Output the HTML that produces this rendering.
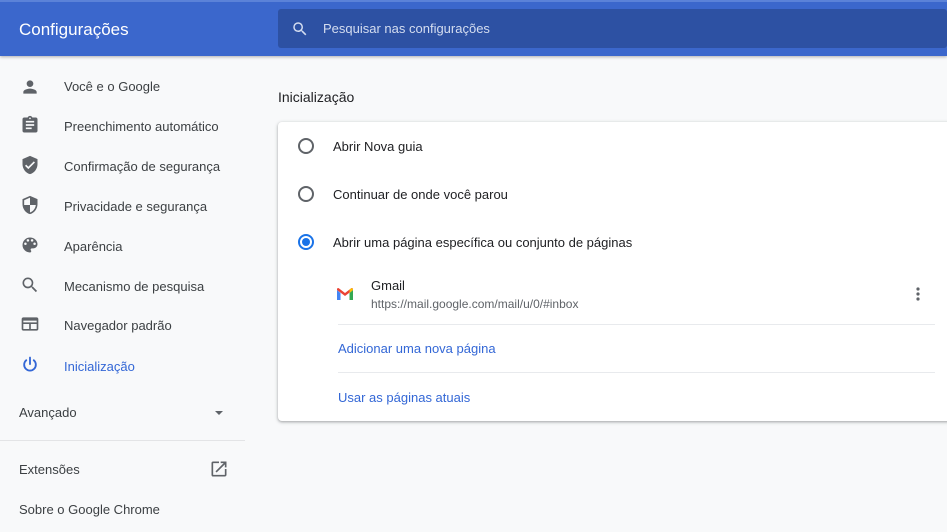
<!DOCTYPE html>
<html><head><meta charset="utf-8"><style>
*{margin:0;padding:0;box-sizing:border-box}
body{width:947px;height:532px;overflow:hidden;background:#f8f9fa;font-family:"Liberation Sans",sans-serif;position:relative;color:#202124}
.hdr{position:absolute;left:0;top:0;width:947px;height:56px;background:#3b67cc;border-top:2px solid #5b82d8;box-shadow:0 1px 3px rgba(0,0,0,.3)}
.title{position:absolute;left:19px;top:18px;color:#fff;font-size:17px}
.search{position:absolute;left:278px;top:7px;width:669px;height:39px;background:#2d51a3;border-radius:3px}
.search span{position:absolute;left:45px;top:12px;color:#d4ddf0;font-size:13px}
.search svg{position:absolute;left:13px;top:11px}
.nav{position:absolute;left:0;font-size:13px;color:#3c4043}
.nav svg{position:absolute;left:20px}
.it{position:absolute;left:64px}
.ic{fill:#5f6368}
.sec{position:absolute;left:278px;top:89px;font-size:14px;color:#202124}
.card{position:absolute;left:278px;top:122px;width:675px;height:299px;background:#fff;border-radius:4px;box-shadow:0 1px 2px rgba(60,64,67,.3),0 1px 3px 1px rgba(60,64,67,.15)}
.rad{position:absolute;left:20px;width:16px;height:16px;border:2px solid #5f6368;border-radius:50%}
.rad.on{border-color:#1a73e8}
.rad.on::after{content:"";position:absolute;left:2px;top:2px;width:8px;height:8px;border-radius:50%;background:#1a73e8}
.lbl{position:absolute;left:55px;font-size:13px;color:#202124}
.link{position:absolute;left:60px;font-size:13px;color:#3367d6}
.hr{position:absolute;left:60px;right:18px;height:1px;background:#e8eaed}
</style></head><body>
<div class="hdr"><div class="title">Configurações</div>
<div class="search"><svg width="18" height="18" viewBox="0 0 24 24"><path fill="#d4ddf0" d="M15.5 14h-.79l-.28-.27A6.47 6.47 0 0016 9.5 6.5 6.5 0 109.5 16c1.610 0 3.09-.59 4.23-1.57l.27.28v.79l5 4.99L20.49 19l-4.99-5zm-6 0C7.01 14 5 11.99 5 9.5S7.01 5 9.5 5 14 7.01 14 9.5 11.99 14 9.5 14z"/></svg><span>Pesquisar nas configurações</span></div></div>

<div class="nav" style="top:77px;width:240px">
<svg style="top:0" width="20" height="20" viewBox="0 0 24 24" class="ic"><path d="M12 12c2.21 0 4-1.790 4-4s-1.79-4-4-4-4 1.79-4 4 1.79 4 4 4zm0 2c-2.67 0-8 1.34-8 4v2h16v-2c0-2.66-5.33-4-8-4z"/></svg><span class="it" style="top:2px">Você e o Google</span>
<svg style="top:38px" width="20" height="20" viewBox="0 0 24 24" class="ic"><path d="M19 3h-4.18C14.4 1.84 13.3 1 12 1s-2.4.84-2.82 2H5c-1.1 0-2 .9-2 2v14c0 1.1.9 2 2 2h14c1.1 0 2-.9 2-2V5c0-1.1-.9-2-2-2zm-7 0c.55 0 1 .45 1 1s-.45 1-1 1-1-.45-1-1 .45-1 1-1zm2 14H7v-2h7v2zm3-4H7v-2h10v2zm0-4H7V7h10v2z"/></svg><span class="it" style="top:42px">Preenchimento automático</span>
<svg style="top:78px" width="20" height="20" viewBox="0 0 24 24" class="ic"><path d="M12 1L3 5v6c0 5.55 3.84 10.74 9 12 5.16-1.26 9-6.45 9-12V5l-9-4zm-2 16l-4-4 1.41-1.41L10 14.17l6.59-6.59L18 9l-8 8z"/></svg><span class="it" style="top:82px">Confirmação de segurança</span>
<svg style="top:118px" width="20" height="20" viewBox="0 0 24 24" class="ic"><path d="M12 1L3 5v6c0 5.55 3.84 10.74 9 12 5.16-1.26 9-6.45 9-12V5l-9-4zm0 10.99h7c-.53 4.12-3.28 7.79-7 8.94V12H5V6.3l7-3.11v8.8z"/></svg><span class="it" style="top:122px">Privacidade e segurança</span>
<svg style="top:158px" width="20" height="20" viewBox="0 0 24 24" class="ic"><path d="M12 3a9 9 0 000 18c.83 0 1.5-.67 1.5-1.5 0-.39-.15-.74-.39-1.01-.23-.26-.38-.61-.38-.99 0-.83.67-1.5 1.5-1.5H16c2.76 0 5-2.24 5-5 0-4.42-4.03-8-9-8zm-5.5 9a1.5 1.5 0 110-3 1.5 1.5 0 010 3zm3-4a1.5 1.5 0 110-3 1.5 1.5 0 010 3zm5 0a1.5 1.5 0 110-3 1.5 1.5 0 010 3zm3 4a1.5 1.5 0 110-3 1.5 1.5 0 010 3z"/></svg><span class="it" style="top:162px">Aparência</span>
<svg style="top:198px" width="20" height="20" viewBox="0 0 24 24" class="ic"><path d="M15.5 14h-.79l-.28-.27A6.47 6.47 0 0016 9.5 6.5 6.5 0 109.5 16c1.61 0 3.09-.59 4.23-1.57l.27.28v.79l5 4.99L20.49 19l-4.99-5zm-6 0C7.01 14 5 11.99 5 9.5S7.01 5 9.5 5 14 7.01 14 9.5 11.99 14 9.5 14z"/></svg><span class="it" style="top:202px">Mecanismo de pesquisa</span>
<svg style="top:237px" width="20" height="20" viewBox="0 0 24 24" class="ic"><path d="M20 4H4c-1.1 0-2 .9-2 2v12c0 1.1.9 2 2 2h16c1.1 0 2-.9 2-2V6c0-1.1-.9-2-2-2zm0 14h-7v-6h7v6zm0-8H4V8h16v2z M4 12h7v6H4z"/></svg><span class="it" style="top:241px">Navegador padrão</span>
<svg style="top:278px" width="20" height="20" viewBox="0 0 24 24"><path fill="none" stroke="#3367d6" stroke-width="2.2" stroke-linecap="round" d="M12 3v8M7.5 6.3A7 7 0 1016.5 6.3"/></svg><span class="it" style="top:282px;color:#3367d6">Inicialização</span>
<span style="position:absolute;left:19px;top:328px">Avançado</span>
<svg style="left:213px;top:330px" width="12" height="12" viewBox="0 0 12 12"><path d="M2 4h8L6 8z" fill="#5f6368"/></svg>
<div style="position:absolute;left:0;top:363px;width:245px;height:1px;background:#e3e4e6"></div>
<span style="position:absolute;left:19px;top:385px">Extensões</span>
<svg style="left:209px;top:382px" width="20" height="20" viewBox="0 0 24 24" class="ic"><path d="M19 19H5V5h7V3H5a2 2 0 00-2 2v14a2 2 0 002 2h14c1.1 0 2-.9 2-2v-7h-2v7zM14 3v2h3.59l-9.83 9.83 1.41 1.41L19 6.41V10h2V3h-7z"/></svg>
<span style="position:absolute;left:19px;top:425px">Sobre o Google Chrome</span>
</div>

<div class="sec">Inicialização</div>
<div class="card">
<div class="rad" style="top:16px"></div><span class="lbl" style="top:17px">Abrir Nova guia</span>
<div class="rad" style="top:64px"></div><span class="lbl" style="top:65px">Continuar de onde você parou</span>
<div class="rad on" style="top:112px"></div><span class="lbl" style="top:113px">Abrir uma página específica ou conjunto de páginas</span>
<svg style="position:absolute;left:59px;top:166px" width="16" height="12" viewBox="0 0 16 12"><path d="M0 2v10h3.5V5z" fill="#4285f4"/><path d="M12.5 5v7H16V2z" fill="#34a853"/><path d="M0 2l8 6 8-6v-1.5L14.5 0 8 5 1.5 0 0 .5z" fill="#ea4335"/><path d="M14.5 0L16 1v1l-3.5 3V1.5z" fill="#fbbc04"/></svg>
<span style="position:absolute;left:93px;top:156px;font-size:13px">Gmail</span>
<span style="position:absolute;left:93px;top:175px;font-size:12px;color:#5f6368">https://mail.google.com/mail/u/0/#inbox</span>
<svg style="position:absolute;left:636px;top:164px" width="8" height="16" viewBox="0 0 8 16"><circle cx="4" cy="3" r="1.6" fill="#5f6368"/><circle cx="4" cy="8" r="1.6" fill="#5f6368"/><circle cx="4" cy="13" r="1.6" fill="#5f6368"/></svg>
<div class="hr" style="top:202px"></div>
<span class="link" style="top:219px">Adicionar uma nova página</span>
<div class="hr" style="top:250px"></div>
<span class="link" style="top:268px">Usar as páginas atuais</span>
</div>
</body></html>
